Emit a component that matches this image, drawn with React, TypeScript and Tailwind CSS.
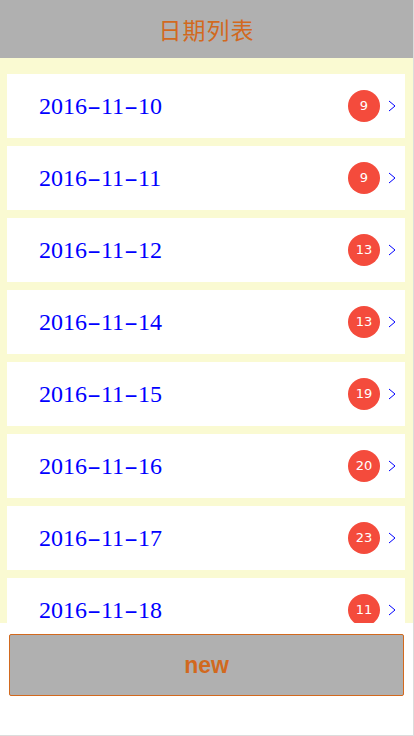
const rows = [
  { date: "2016-11-10", count: 9 },
  { date: "2016-11-11", count: 9 },
  { date: "2016-11-12", count: 13 },
  { date: "2016-11-14", count: 13 },
  { date: "2016-11-15", count: 19 },
  { date: "2016-11-16", count: 20 },
  { date: "2016-11-17", count: 23 },
  { date: "2016-11-18", count: 11 },
];

// the hyphen in the original font is much wider than Times', so stretch it a bit
function DateText({ value }: { value: string }) {
  const parts = value.split("-");
  return (
    <span className="font-['Liberation_Serif',serif] text-[24px] leading-none text-[#0000ff]">
      {parts.map((p, i) => (
        <span key={i}>
          {i > 0 && <span className="mx-[3px] inline-block scale-x-[1.7]">-</span>}
          {p}
        </span>
      ))}
    </span>
  );
}

function Row({ date, count }: { date: string; count: number }) {
  return (
    <div className="flex h-[64px] shrink-0 items-center bg-white pl-[32px] pr-[8px]">
      <DateText value={date} />
      <div className="ml-auto flex h-[32px] w-[32px] items-center justify-center rounded-full bg-[#f44b3c] font-['DejaVu_Sans',sans-serif] text-[13px] text-white">
        {count}
      </div>
      <svg width="10" height="14" viewBox="0 0 10 14" className="ml-[7px]">
        <polyline points="2,2 8,7 2,12" fill="none" stroke="#0000ff" strokeWidth="1" />
      </svg>
    </div>
  );
}

export default function App() {
  return (
    <div className="flex h-[736px] w-[414px] flex-col border-r border-b border-[#dcdcdc] bg-white">
      <div className="flex h-[58px] shrink-0 items-center justify-center bg-[#b0b0b0]">
        <h1 className="font-['Noto_Sans_CJK_SC',sans-serif] text-[23px] font-normal tracking-[1px] text-[#d2691e]">
          日期列表
        </h1>
      </div>

      <div className="flex h-[565px] shrink-0 flex-col gap-[8px] overflow-hidden bg-[#fafad2] pt-[16px] pl-[7px] pr-[8px]">
        {rows.map((r) => (
          <Row key={r.date} date={r.date} count={r.count} />
        ))}
      </div>

      <div className="px-[9px] pt-[11px]">
        <button
          type="button"
          className="flex h-[62px] w-full items-center justify-center rounded-[2px] border border-[#d2691e] bg-[#b0b0b0] font-['Liberation_Sans',sans-serif] text-[23px] font-bold text-[#d2691e]"
        >
          new
        </button>
      </div>
    </div>
  );
}
